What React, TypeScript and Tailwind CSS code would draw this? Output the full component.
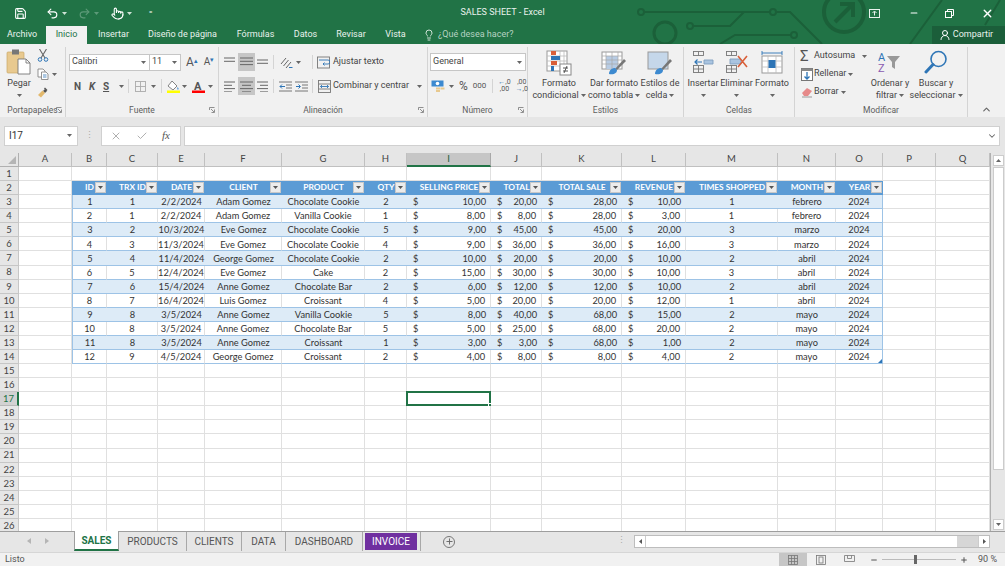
import React from 'react';
import { Save, Undo2, Redo2, Lightbulb, UserRound, X, Check, ChevronUp, ChevronDown, Plus, Minus, Pointer } from 'lucide-react';

const uiFont = { fontFamily: 'Roboto, "Noto Sans", sans-serif' };

const columns = ['A', 'B', 'C', 'E', 'F', 'G', 'H', 'I', 'J', 'K', 'L', 'M', 'N', 'O', 'P', 'Q'];
const headers = ['ID', 'TRX ID', 'DATE', 'CLIENT', 'PRODUCT', 'QTY', 'SELLING PRICE', 'TOTAL', 'TOTAL SALE', 'REVENUE', 'TIMES SHOPPED', 'MONTH', 'YEAR'];

const sales: (string | number)[][] = [
  [1, 1, '2/2/2024', 'Adam Gomez', 'Chocolate Cookie', 2, '10,00', '20,00', '28,00', '10,00', 1, 'febrero', 2024],
  [2, 1, '2/2/2024', 'Adam Gomez', 'Vanilla Cookie', 1, '8,00', '8,00', '28,00', '3,00', 1, 'febrero', 2024],
  [3, 2, '10/3/2024', 'Eve Gomez', 'Chocolate Cookie', 5, '9,00', '45,00', '45,00', '20,00', 3, 'marzo', 2024],
  [4, 3, '11/3/2024', 'Eve Gomez', 'Chocolate Cookie', 4, '9,00', '36,00', '36,00', '16,00', 3, 'marzo', 2024],
  [5, 4, '11/4/2024', 'George Gomez', 'Chocolate Cookie', 2, '10,00', '20,00', '20,00', '10,00', 2, 'abril', 2024],
  [6, 5, '12/4/2024', 'Eve Gomez', 'Cake', 2, '15,00', '30,00', '30,00', '10,00', 3, 'abril', 2024],
  [7, 6, '15/4/2024', 'Anne Gomez', 'Chocolate Bar', 2, '6,00', '12,00', '12,00', '10,00', 2, 'abril', 2024],
  [8, 7, '16/4/2024', 'Luis Gomez', 'Croissant', 4, '5,00', '20,00', '20,00', '12,00', 1, 'abril', 2024],
  [9, 8, '3/5/2024', 'Anne Gomez', 'Vanilla Cookie', 5, '8,00', '40,00', '68,00', '15,00', 2, 'mayo', 2024],
  [10, 8, '3/5/2024', 'Anne Gomez', 'Chocolate Bar', 5, '5,00', '25,00', '68,00', '20,00', 2, 'mayo', 2024],
  [11, 8, '3/5/2024', 'Anne Gomez', 'Croissant', 1, '3,00', '3,00', '68,00', '1,00', 2, 'mayo', 2024],
  [12, 9, '4/5/2024', 'George Gomez', 'Croissant', 2, '4,00', '8,00', '8,00', '4,00', 2, 'mayo', 2024],
];

const Caret = ({ color = '#666' }: { color?: string }) => (
  <svg width="5" height="3" viewBox="0 0 5 3" className="shrink-0"><path d="M0 0h5L2.5 3z" fill={color} /></svg>
);

const Lines = ({ rows }: { rows: [number, number][] }) => (
  <svg width="13" height="11" viewBox="0 0 13 11">
    {rows.map(([x, w], i) => <rect key={i} x={x} y={i * 3.3 + 0.5} width={w} height="1" fill="#666" />)}
  </svg>
);

const CircuitArt = () => (
  <svg className="absolute right-0 top-0 pointer-events-none" width="420" height="44" viewBox="0 0 420 44" fill="none" stroke="#1b6039" strokeWidth="2">
    <circle cx="56" cy="12" r="3" />
    <path d="M59 12h126" />
    <circle cx="80" cy="33" r="11" strokeWidth="3" />
    <circle cx="105" cy="26" r="3" />
    <path d="M108 26h37l14-14" />
    <circle cx="188" cy="12" r="3" />
    <path d="M191 12h14l32 32" />
    <path d="M135 44l15-9h56" />
    <circle cx="209" cy="35" r="3" />
    <circle cx="259" cy="12" r="20" strokeWidth="4" />
    <path d="M250 22l18-18M255 4h13v13" strokeWidth="4" />
    <path d="M325 44l32-44M400 25l15-25" />
  </svg>
);

const FilterButton = () => (
  <span className="absolute right-[1px] top-[1px] w-[11px] h-[11px] bg-[#ececec] border border-[#c8c8c8] flex items-center justify-center">
    <Caret color="#555" />
  </span>
);

const Group = ({ label, width, launcher, children }: { label: string; width: string; launcher?: boolean; children: React.ReactNode }) => (
  <div className={`${width} h-full shrink-0 flex flex-col border-r border-[#d4d4d4]`}>
    <div className="flex-1 min-h-0 flex">{children}</div>
    <div className="h-[14px] flex items-center justify-center relative text-[8.5px] text-[#5e5e5e]">
      {label}
      {launcher && (
        <svg className="absolute right-[3px] top-[4px]" width="6" height="6" viewBox="0 0 6 6" fill="none" stroke="#777" strokeWidth="0.8">
          <path d="M0.5 3V0.5H5.5M5.5 2.5V5.5H2.5M2 2l3 3" />
        </svg>
      )}
    </div>
  </div>
);

const BigButton = ({ icon, lines, width, caretLine }: { icon: React.ReactNode; lines: string[]; width: string; caretLine?: boolean }) => (
  <div className={`${width} shrink-0 flex flex-col items-center text-[9px] leading-[12px] text-[#444] whitespace-nowrap`}>
    <div className="h-[30px] pt-[3px] flex items-start justify-center">{icon}</div>
    <div>{lines[0]}</div>
    {caretLine ? (
      <div className="flex items-center gap-[2px]">{lines[1]}<Caret /></div>
    ) : (
      <div className="h-[12px] flex items-center"><Caret /></div>
    )}
  </div>
);

const CondFormatIcon = () => (
  <svg width="26" height="26" viewBox="0 0 26 26">
    <rect x="1" y="1" width="20" height="20" fill="#fff" stroke="#999" />
    <path d="M1 6h20M1 11h20M1 16h20M14 1v20M18 1v20" stroke="#bbb" strokeWidth="0.8" />
    <rect x="5" y="1" width="5" height="4" fill="#d9603a" />
    <rect x="5" y="6" width="9" height="4" fill="#2e75b6" />
    <rect x="5" y="11" width="6" height="4" fill="#d9603a" />
    <rect x="5" y="16" width="3" height="5" fill="#2e75b6" />
    <rect x="14" y="14" width="11" height="11" fill="#fff" stroke="#888" />
    <path d="M17 18h5M17 21h5M21 16l-3 7" stroke="#444" strokeWidth="0.9" />
  </svg>
);

const TableFormatIcon = ({ solid }: { solid?: boolean }) => (
  <svg width="26" height="26" viewBox="0 0 26 26">
    <rect x="1" y="2" width="20" height="17" fill={solid ? '#c5d7ea' : '#fff'} stroke="#999" />
    {!solid && <rect x="5" y="6" width="12" height="13" fill="#b8cce4" />}
    {!solid && <path d="M1 6h20M1 10h20M1 14h20M5 2v17M11 2v17M17 2v17" stroke="#a8a8a8" strokeWidth="0.7" />}
    <path d="M14 19l9-10 2 2-9 9z" fill="#777" />
    <path d="M8 24c0-4 3-6 6-6l2 2c0 3-3 5-8 4z" fill="#3d8ad0" />
  </svg>
);

const InsertIcon = () => (
  <svg width="22" height="24" viewBox="0 0 22 24" fill="none" stroke="#777" strokeWidth="0.9">
    <rect x="1.5" y="1.5" width="10" height="4" /><path d="M6.5 1.5v4" />
    <rect x="1.5" y="15.5" width="10" height="7" /><path d="M6.5 15.5v7M1.5 19h10" />
    <path d="M12 10h9v4h-9z" fill="#a9c4e0" stroke="#7f9fc0" />
    <path d="M10 12H3M5.5 9.5L3 12l2.5 2.5" stroke="#2e75b6" strokeWidth="1.2" />
  </svg>
);

const DeleteIcon = () => (
  <svg width="24" height="24" viewBox="0 0 24 24" fill="none" stroke="#777" strokeWidth="0.9">
    <rect x="1.5" y="1.5" width="10" height="4" /><path d="M6.5 1.5v4" />
    <rect x="1.5" y="15.5" width="10" height="7" /><path d="M6.5 15.5v7M1.5 19h10" />
    <path d="M5 9h11v5H5z" fill="#a9c4e0" stroke="#7f9fc0" />
    <path d="M13 6l9 11M22 6l-9 11" stroke="#d9603a" strokeWidth="1.6" />
  </svg>
);

const FormatCellIcon = () => (
  <svg width="22" height="26" viewBox="0 0 22 26" fill="none">
    <path d="M1 3h20M1 1v4M21 1v4" stroke="#2e75b6" strokeWidth="0.9" />
    <rect x="1" y="6" width="20" height="17" fill="#fff" stroke="#999" />
    <path d="M1 11h20M1 17h20M7 6v17M15 6v17" stroke="#bbb" strokeWidth="0.8" />
    <rect x="7.5" y="10" width="7" height="8" fill="#2e75b6" />
  </svg>
);

const SortIcon = () => (
  <svg width="24" height="27" viewBox="0 0 24 27" fill="none">
    <path d="M9 6h13l-5 6v7l-3-2v-5z" fill="#999" />
    <text x="0" y="11" fontSize="11" fontFamily="Roboto" fill="#2e75b6">A</text>
    <text x="0" y="22" fontSize="11" fontFamily="Roboto" fill="#8a5ab0">Z</text>
  </svg>
);

const SearchIcon = () => (
  <svg width="24" height="24" viewBox="0 0 24 24" fill="none" stroke="#2e75b6">
    <circle cx="14.5" cy="9" r="7.5" strokeWidth="1.6" />
    <path d="M9 14.5L2 22" strokeWidth="3" strokeLinecap="round" />
  </svg>
);

const PasteIcon = () => (
  <svg width="26" height="26" viewBox="0 0 26 26">
    <rect x="1" y="3" width="17" height="21" rx="1" fill="#e8c98f" stroke="#c9a765" strokeWidth="0.7" />
    <rect x="6" y="0.5" width="7" height="5" fill="#777" />
    <path d="M12 10h8l4 4v11H12z" fill="#fff" stroke="#777" strokeWidth="0.9" />
    <path d="M20 10v4h4" fill="none" stroke="#777" strokeWidth="0.9" />
  </svg>
);

const ScissorsIcon = () => (
  <svg width="12" height="13" viewBox="0 0 12 13" fill="none">
    <path d="M2.5 0l5.5 9M9.5 0L4 9" stroke="#666" strokeWidth="1.1" />
    <circle cx="3" cy="10.5" r="1.8" stroke="#2e75b6" />
    <circle cx="9" cy="10.5" r="1.8" stroke="#2e75b6" />
  </svg>
);

const CopyIcon = () => (
  <svg width="12" height="12" viewBox="0 0 12 12" fill="#fff" stroke="#7a7a7a" strokeWidth="0.8">
    <path d="M1 1h5l2 2v6H1z" />
    <path d="M4.5 4h4.5l2 2v5.5H4.5z" />
    <path d="M6 7h3.5M6 9h3.5" stroke="#2e75b6" />
  </svg>
);

const BrushIcon = () => (
  <svg width="12" height="12" viewBox="0 0 12 12">
    <path d="M6 5l2-2 2 2-2 2z" fill="#555" />
    <path d="M8 1.5l2.5 2.5L9.5 5 7 2.5z" fill="#555" />
    <path d="M1 9l4.5-4.5 2.5 2.5L4 11.5z" fill="#e3b96d" />
  </svg>
);

const FillIcon = () => (
  <svg width="13" height="13" viewBox="0 0 13 13">
    <path d="M5 1l5 5-4 4-5-4z" fill="#fff" stroke="#666" strokeWidth="0.8" />
    <path d="M10.5 7c1 1.2 1.5 2 .8 2.6-.6.4-1.3-.2-.8-2.6z" fill="#3d8ad0" />
    <rect x="0" y="10.5" width="13" height="2.5" fill="#ffff00" />
  </svg>
);

const FontColorIcon = () => (
  <svg width="13" height="13" viewBox="0 0 13 13">
    <text x="2" y="9.5" fontSize="11" fontFamily="Roboto" fill="#555">A</text>
    <rect x="0" y="10.5" width="13" height="2.5" fill="#ff0000" />
  </svg>
);

const BordersIcon = () => (
  <svg width="11" height="11" viewBox="0 0 11 11" fill="none" stroke="#aaa" strokeWidth="0.9">
    <rect x="0.5" y="0.5" width="10" height="10" /><path d="M5.5 0.5v10M0.5 5.5h10" />
  </svg>
);

const OrientIcon = () => (
  <svg width="13" height="13" viewBox="0 0 13 13" fill="none" stroke="#666" strokeWidth="1">
    <path d="M1 8l5-6M3.5 10l5-6M6 12l5-6" />
    <path d="M9 11.5h3.5" stroke="#2e75b6" />
  </svg>
);

const IndentIcon = ({ flip }: { flip?: boolean }) => (
  <svg width="13" height="11" viewBox="0 0 13 11" fill="none" stroke="#777" strokeWidth="1">
    <path d="M0 1h13M0 10h13M7 4h6M7 7h6" />
    <path d={flip ? 'M1 5.5h4M3.5 3.5l2 2-2 2' : 'M6 5.5H1M3 3.5l-2 2 2 2'} stroke="#2e75b6" />
  </svg>
);

const WrapIcon = () => (
  <svg width="13" height="13" viewBox="0 0 13 13" fill="none" stroke="#777" strokeWidth="0.9">
    <rect x="0.5" y="1" width="12" height="11" />
    <path d="M2 4h9a1.5 1.5 0 010 4H6M7.5 6.5L6 8l1.5 1.5" stroke="#2e75b6" />
  </svg>
);

const MergeIcon = () => (
  <svg width="13" height="13" viewBox="0 0 13 13" fill="none" stroke="#777" strokeWidth="0.9">
    <rect x="0.5" y="0.5" width="12" height="12" />
    <path d="M0.5 4h12M0.5 9h12" />
    <path d="M2.5 6.5h8M4 5l-1.5 1.5L4 8M9 5l1.5 1.5L9 8" stroke="#2e75b6" />
  </svg>
);

const MoneyIcon = () => (
  <svg width="14" height="13" viewBox="0 0 14 13">
    <rect x="0.5" y="0.5" width="12" height="6" fill="#3d8ad0" />
    <circle cx="6.5" cy="3.5" r="1.8" fill="#fff" />
    <rect x="5" y="7.5" width="4" height="2" fill="#e8c98f" />
    <rect x="5" y="10" width="4" height="2" fill="#e8c98f" />
    <rect x="9.5" y="7.5" width="4" height="2" fill="#e8c98f" />
  </svg>
);

const FillDownIcon = () => (
  <svg width="12" height="13" viewBox="0 0 12 13" fill="none">
    <rect x="0.5" y="0.5" width="11" height="12" fill="#fff" stroke="#777" />
    <rect x="0.5" y="0.5" width="11" height="2.5" fill="#888" />
    <path d="M6 4v7M3.5 8.5L6 11l2.5-2.5" stroke="#2e75b6" strokeWidth="1.3" />
  </svg>
);

const EraserIcon = () => (
  <svg width="12" height="12" viewBox="0 0 12 12">
    <path d="M1 7l5-5 5 3-4 5H3z" fill="#e68a8a" />
    <path d="M1 11h10" stroke="#999" />
  </svg>
);

const SmallAction = ({ icon, label }: { icon: React.ReactNode; label: string }) => (
  <div className="h-[18px] flex items-center gap-[1px] text-[9px] text-[#444] whitespace-nowrap">
    <span className="w-[13px] flex justify-center">{icon}</span>
    {label}
  </div>
);

const Ribbon = () => (
  <div className="h-[73px] shrink-0 bg-[#f1f1f1] flex pt-[3px]" style={uiFont}>
    <Group label="Portapapeles" width="w-[66px]" launcher>
      <div className="w-[35px] pl-[3px] flex flex-col items-center text-[9px] text-[#444]">
        <div className="mt-[2px]"><PasteIcon /></div>
        <div className="mt-[2px] leading-[13px]">Pegar</div>
        <div className="mt-[4px]"><Caret /></div>
      </div>
      <div className="flex flex-col gap-[6px] pt-[2px] pl-[2px]">
        <ScissorsIcon />
        <div className="flex items-center gap-[3px]"><CopyIcon /><Caret /></div>
        <BrushIcon />
      </div>
    </Group>
    <Group label="Fuente" width="w-[153px]" launcher>
      <div className="flex flex-col pl-[3px] pt-[6px]">
        <div className="flex items-center h-[18px]">
          <div className="w-[81px] h-[17px] bg-white border border-[#c6c6c6] flex items-center justify-between px-[2px] pr-[3px] text-[9px] text-[#444]">Calibri<Caret /></div>
          <div className="w-[32px] h-[17px] -ml-px bg-white border border-[#c6c6c6] flex items-center justify-between px-[2px] pr-[3px] text-[9px] text-[#444]">11<Caret /></div>
          <span className="ml-[5px] text-[12px] text-[#555] leading-none">A<sup className="text-[7px] text-[#2e75b6]">▴</sup></span>
          <span className="ml-[6px] text-[10px] text-[#555] leading-none">A<sup className="text-[7px] text-[#2e75b6]">▾</sup></span>
        </div>
        <div className="flex items-center h-[18px] mt-[6px] text-[10px] font-bold text-[#555]">
          <span className="ml-[5px] w-[11px]">N</span>
          <span className="ml-[4px] w-[11px] italic">K</span>
          <span className="ml-[3px] w-[12px] underline">S</span>
          <span className="ml-[4px]"><Caret /></span>
          <span className="ml-[4px] w-px h-[14px] bg-[#d4d4d4]" />
          <span className="ml-[6px]"><BordersIcon /></span>
          <span className="ml-[5px]"><Caret /></span>
          <span className="ml-[5px] w-px h-[14px] bg-[#d4d4d4]" />
          <span className="ml-[5px]"><FillIcon /></span>
          <span className="ml-[2px]"><Caret /></span>
          <span className="ml-[5px]"><FontColorIcon /></span>
          <span className="ml-[3px]"><Caret /></span>
        </div>
      </div>
    </Group>
    <Group label="Alineación" width="w-[209px]" launcher>
      <div className="flex flex-col pl-[5px] pt-[6px] text-[9px] text-[#444]">
        <div className="flex items-center h-[18px]">
          <span className="w-[14px]"><Lines rows={[[0, 11], [0, 11]]} /></span>
          <span className="w-[17px] h-[18px] bg-[#c6c6c6] flex items-center justify-center"><Lines rows={[[0, 13], [0, 13], [0, 13]]} /></span>
          <span className="w-[15px] pl-[2px] pt-[4px]"><Lines rows={[[0, 11], [0, 11]]} /></span>
          <span className="ml-[3px] w-px h-[14px] bg-[#d4d4d4]" />
          <span className="ml-[6px]"><OrientIcon /></span>
          <span className="ml-[3px]"><Caret /></span>
          <span className="ml-[11px] w-px h-[14px] bg-[#d4d4d4]" />
          <span className="ml-[4px]"><WrapIcon /></span>
          <span className="ml-[3px] whitespace-nowrap">Ajustar texto</span>
        </div>
        <div className="flex items-center h-[18px] mt-[6px]">
          <span className="w-[14px]"><Lines rows={[[0, 11], [0, 8], [0, 11], [0, 8]]} /></span>
          <span className="w-[17px] h-[18px] bg-[#c6c6c6] flex items-center justify-center"><Lines rows={[[0, 13], [2, 9], [0, 13], [2, 9]]} /></span>
          <span className="w-[15px] pl-[2px]"><Lines rows={[[0, 11], [3, 8], [0, 11], [3, 8]]} /></span>
          <span className="ml-[3px] w-px h-[14px] bg-[#d4d4d4]" />
          <span className="ml-[5px]"><IndentIcon /></span>
          <span className="ml-[3px]"><IndentIcon flip /></span>
          <span className="ml-[4px] w-px h-[14px] bg-[#d4d4d4]" />
          <span className="ml-[5px]"><MergeIcon /></span>
          <span className="ml-[2px] whitespace-nowrap">Combinar y centrar</span>
          <span className="ml-[8px]"><Caret /></span>
        </div>
      </div>
    </Group>
    <Group label="Número" width="w-[100px]" launcher>
      <div className="flex flex-col pl-[2px] pt-[6px] text-[#555]">
        <div className="w-[96px] h-[18px] bg-white border border-[#c6c6c6] flex items-center justify-between px-[2px] pr-[3px] text-[9px] text-[#444]">General<Caret /></div>
        <div className="flex items-center h-[18px] mt-[6px]">
          <span className="ml-[1px]"><MoneyIcon /></span>
          <span className="ml-[4px]"><Caret /></span>
          <span className="ml-[5px] text-[12px] leading-none">%</span>
          <span className="ml-[5px] text-[8px]">000</span>
          <span className="ml-[6px] w-px h-[14px] bg-[#d4d4d4]" />
          <span className="ml-[5px] text-[7px] leading-[7px] text-center"><span className="text-[#2e75b6]">←</span>,0<br />,00</span>
          <span className="ml-[5px] text-[7px] leading-[7px] text-center">,00<br /><span className="text-[#2e75b6]">→</span>,0</span>
        </div>
      </div>
    </Group>
    <Group label="Estilos" width="w-[156px]">
      <BigButton width="w-[60px] ml-[1px]" icon={<CondFormatIcon />} lines={['Formato', 'condicional']} caretLine />
      <BigButton width="w-[50px]" icon={<TableFormatIcon />} lines={['Dar formato', 'como tabla']} caretLine />
      <BigButton width="w-[42px]" icon={<TableFormatIcon solid />} lines={['Estilos de', 'celda']} caretLine />
    </Group>
    <Group label="Celdas" width="w-[111px]">
      <BigButton width="w-[32px] ml-[3px]" icon={<InsertIcon />} lines={['Insertar']} />
      <BigButton width="w-[35px]" icon={<DeleteIcon />} lines={['Eliminar']} />
      <BigButton width="w-[36px]" icon={<FormatCellIcon />} lines={['Formato']} />
    </Group>
    <Group label="Modificar" width="w-[173px]">
      <div className="w-[74px] pl-[5px] flex flex-col">
        <div className="flex items-center">
          <div className="h-[18px] flex items-center gap-[1px] text-[9px] text-[#444]">
            <span className="text-[15px] leading-none w-[13px] text-[#555]">Σ</span>Autosuma
          </div>
          <span className="ml-[7px]"><Caret /></span>
        </div>
        <div className="flex items-center"><SmallAction icon={<FillDownIcon />} label="Rellenar" /><span className="ml-[2px]"><Caret /></span></div>
        <div className="flex items-center"><SmallAction icon={<EraserIcon />} label="Borrar" /><span className="ml-[2px]"><Caret /></span></div>
      </div>
      <BigButton width="w-[46px] ml-[-2px]" icon={<SortIcon />} lines={['Ordenar y', 'filtrar']} caretLine />
      <BigButton width="w-[46px]" icon={<SearchIcon />} lines={['Buscar y', 'seleccionar']} caretLine />
    </Group>
    <div className="flex-1 flex items-end justify-center pb-[2px]">
      <ChevronUp size={11} color="#666" strokeWidth={2.5} />
    </div>
  </div>
);

const FormulaBar = () => (
  <div className="h-[36px] shrink-0 bg-[#e6e6e6] flex items-center pl-[4px] pr-[5px] pt-[1px]" style={uiFont}>
    <div className="w-[74px] h-[20px] bg-white border border-[#d0d0d0] flex items-center justify-between pl-[4px] pr-[5px] text-[10px] text-[#333]">
      I17<Caret />
    </div>
    <div className="w-[23px] flex justify-center text-[#aaa] text-[9px] tracking-tighter">⋮</div>
    <div className="w-[80px] h-[20px] bg-white border border-[#d0d0d0] flex items-center pl-[8px] gap-[14px] text-[#b0b0b0]">
      <X size={12} />
      <Check size={12} />
      <span className="italic text-[11px] text-[#555]" style={{ fontFamily: '"Liberation Serif", serif' }}>fx</span>
    </div>
    <div className="flex-1 ml-[3px] h-[20px] bg-white border border-[#d0d0d0] flex items-center justify-end pr-[2px]">
      <ChevronDown size={10} color="#666" strokeWidth={2.5} />
    </div>
  </div>
);

const DataCell = ({ value, col, band, last }: { value: string | number; col: number; band: boolean; last: boolean }) => {
  const money = col >= 6 && col <= 9;
  return (
    <div className={`relative flex items-center whitespace-nowrap pt-px text-[9.25px] text-[#333] border-b border-[#9dc3e6] ${band ? 'bg-[#ddebf7]' : 'bg-white'} ${col === 0 ? 'border-l border-l-[#9dc3e6]' : ''} ${col === 12 ? 'border-r border-r-[#9dc3e6]' : band ? '' : 'border-r border-r-[#e0e0e0]'} ${money ? 'justify-between pl-[6px] pr-[5px]' : 'justify-center'}`}>
      {money && <span>$</span>}
      <span>{value}</span>
      {last && col === 12 && <span className="absolute right-0 bottom-0 w-0 h-0 border-l-[4px] border-l-transparent border-b-[4px] border-b-[#2e75b6]" />}
    </div>
  );
};

const BlankCell = ({ selected }: { selected?: boolean }) => (
  <div className="relative border-r border-b border-[#e0e0e0] bg-white">
    {selected && (
      <>
        <div className="absolute -left-px -top-[1px] right-[-1px] bottom-[-1px] border-2 border-[#217346]" />
        <div className="absolute right-[-2px] bottom-[-2px] w-[4px] h-[4px] bg-[#217346] border border-white" />
      </>
    )}
  </div>
);

const RowHeader = ({ n }: { n: number }) => (
  <div className={`flex items-center justify-center pt-px text-[9.5px] border-b ${n === 17 ? 'bg-[#d2d2d2] border-[#b8b8b8] border-r-2 border-r-[#217346] text-[#217346]' : 'bg-[#e6e6e6] border-r border-[#c6c6c6] text-[#444]'}`}>{n}</div>
);

const Sheet = () => {
  const rowNumbers = Array.from({ length: 26 }, (_, i) => i + 1);
  return (
    <div className="flex-1 min-w-0 overflow-hidden grid grid-cols-[19px_53px_35px_51px_47px_77px_83px_42px_84px_51px_80px_64px_92px_58px_47px_53px_54px] grid-rows-[14px_repeat(26,14.08px)]" style={{ fontFamily: 'Lato, sans-serif' }}>
      <div className="bg-[#e6e6e6] border-r border-b border-[#b0b0b0] relative">
        <span className="absolute right-[2px] bottom-[2px] w-0 h-0 border-l-[8px] border-l-transparent border-b-[8px] border-b-[#b5b5b5]" />
      </div>
      {columns.map(c => (
        <div key={c} className={`flex items-center justify-center text-[9.5px] border-r ${c === 'I' ? 'bg-[#c6c6c6] border-b-2 border-b-[#217346] border-r-[#a8a8a8] text-[#1b6039]' : 'bg-[#e6e6e6] border-b border-[#c0c0c0] text-[#444]'}`}>{c}</div>
      ))}
      {rowNumbers.map(n => (
        <React.Fragment key={n}>
          <RowHeader n={n} />
          {columns.map((c, i) => {
            const tableCol = i - 1;
            if (tableCol >= 0 && tableCol < 13 && n === 2) {
              return (
                <div key={c} className="relative flex items-center justify-center bg-[#5b9bd5] text-white font-bold text-[8.4px] whitespace-nowrap border-b border-[#5b9bd5]">
                  {headers[tableCol]}
                  <FilterButton />
                </div>
              );
            }
            if (tableCol >= 0 && tableCol < 13 && n >= 3 && n <= 14) {
              return <DataCell key={c} value={sales[n - 3][tableCol]} col={tableCol} band={n % 2 === 1} last={n === 14} />;
            }
            return <BlankCell key={c} selected={c === 'I' && n === 17} />;
          })}
        </React.Fragment>
      ))}
    </div>
  );
};

const VerticalScroll = () => (
  <div className="w-[15px] shrink-0 bg-[#e6e6e6] border-l border-[#b0b0b0] flex flex-col items-center pt-[2px] pb-[1px] gap-px pl-[1px]">
    <div className="w-[11px] h-[11px] bg-white border border-[#ccc] flex items-center justify-center"><svg width="5" height="3" viewBox="0 0 5 3"><path d="M2.5 0L5 3H0z" fill="#666" /></svg></div>
    <div className="w-[11px] h-[303px] bg-white border border-[#ccc]" />
    <div className="flex-1" />
    <div className="w-[11px] h-[11px] bg-white border border-[#ccc] flex items-center justify-center"><Caret /></div>
  </div>
);

const tabs = ['PRODUCTS', 'CLIENTS', 'DATA', 'DASHBOARD'];

const SheetTabs = () => (
  <div className="h-[21px] shrink-0 bg-[#e6e6e6] border-t border-[#9e9e9e] flex text-[10px] text-[#555]" style={uiFont}>
    <div className="w-[74px] flex items-center justify-center gap-[14px] pl-[2px] pb-[2px]">
      <svg width="4" height="6" viewBox="0 0 4 6"><path d="M4 0v6L0 3z" fill="#b5b5b5" /></svg>
      <svg width="4" height="6" viewBox="0 0 4 6"><path d="M0 0v6l4-3z" fill="#b5b5b5" /></svg>
    </div>
    <div className="w-[45px] h-[20px] -mt-px bg-white border-x border-[#9e9e9e] border-b-2 border-b-[#217346] font-bold text-[#217346] flex items-center justify-center">SALES</div>
    {tabs.map((t, i) => (
      <div key={t} className={`h-[19px] flex items-center justify-center border-r border-[#a8a8a8] ${['w-[68px]', 'w-[55px]', 'w-[44px]', 'w-[77px]'][i]}`}>{t}</div>
    ))}
    <div className="w-[52px] h-[17px] mt-[1px] ml-[2px] bg-[#7030a0] text-white flex items-center justify-center">INVOICE</div>
    <div className="w-[4px] h-[19px] border-r border-[#a8a8a8]" />
    <div className="ml-[22px] h-[19px] flex items-center">
      <span className="w-[12px] h-[12px] rounded-full border border-[#777] flex items-center justify-center"><Plus size={9} color="#666" strokeWidth={2.5} /></span>
    </div>
    <div className="flex-1 flex items-center justify-end text-[#aaa] pr-[8px] pb-[2px] text-[9px]">⋮</div>
    <div className="w-[356px] h-[13px] mt-[3px] mr-[15px] flex bg-[#d6d6d6] border border-[#bdbdbd]">
      <div className="w-[11px] bg-white border-r border-[#ccc] flex items-center justify-center"><svg width="3" height="5" viewBox="0 0 3 5"><path d="M3 0v5L0 2.5z" fill="#555" /></svg></div>
      <div className="w-[311px] bg-white" />
      <div className="flex-1" />
      <div className="w-[11px] bg-white border-l border-[#ccc] flex items-center justify-center"><svg width="3" height="5" viewBox="0 0 3 5"><path d="M0 0v5l3-2.5z" fill="#555" /></svg></div>
    </div>
  </div>
);

const StatusBar = () => (
  <div className="h-[14px] shrink-0 bg-[#f1f1f1] border-t border-[#d6d6d6] flex items-center text-[9px] text-[#555]" style={uiFont}>
    <span className="pl-[5px]">Listo</span>
    <div className="flex-1" />
    <div className="w-[28px] h-[13px] bg-[#c6c6c6] flex items-center justify-center">
      <svg width="10" height="10" viewBox="0 0 10 10" fill="none" stroke="#777" strokeWidth="0.8"><rect x="0.5" y="0.5" width="9" height="9" /><path d="M3.5 0.5v9M6.5 0.5v9M0.5 3.5h9M0.5 6.5h9" /></svg>
    </div>
    <div className="w-[28px] flex justify-center">
      <svg width="10" height="10" viewBox="0 0 10 10" fill="none" stroke="#777" strokeWidth="0.8"><rect x="0.5" y="0.5" width="9" height="9" /><rect x="3" y="2" width="4" height="6" /></svg>
    </div>
    <div className="w-[28px] flex justify-center">
      <svg width="11" height="10" viewBox="0 0 11 10" fill="none" stroke="#777" strokeWidth="0.8"><path d="M0.5 0.5h10v6h-10zM3.5 0.5v3h4v-3" /></svg>
    </div>
    <Minus size={8} color="#555" strokeWidth={3} className="ml-[7px]" />
    <div className="relative w-[74px] h-px bg-[#bbb] ml-[4px]">
      <span className="absolute left-[32px] -top-[4px] w-[3px] h-[9px] bg-[#666]" />
    </div>
    <Plus size={8} color="#555" strokeWidth={3} className="ml-[4px]" />
    <span className="ml-[10px] mr-[8px] whitespace-nowrap">90 %</span>
  </div>
);

const App: React.FC = () => (
  <div className="w-[1005px] h-[566px] flex flex-col overflow-hidden bg-white">
    <div className="relative shrink-0 bg-[#217346] text-white" style={uiFont}>
      <CircuitArt />
      <div className="relative h-[26px] grid grid-cols-[1fr_auto_1fr] items-center">
        <div className="flex items-center pl-[14px]">
          <Save size={13} color="#fff" />
          <Undo2 size={13} color="#fff" className="ml-[19px]" />
          <span className="ml-[3px]"><Caret color="#cfe3d7" /></span>
          <Redo2 size={13} color="#5d9a79" className="ml-[11px]" />
          <span className="ml-[3px]"><Caret color="#5d9a79" /></span>
          <Pointer size={13} color="#fff" className="ml-[12px]" />
          <span className="ml-[3px]"><Caret color="#cfe3d7" /></span>
          <span className="ml-[17px] text-[9px] leading-none">⁼</span>
        </div>
        <div className="text-[9px] text-[#e9f2ed]">SALES SHEET - Excel</div>
        <div className="flex items-center justify-end">
          <svg width="11" height="9" viewBox="0 0 11 9" fill="none" stroke="#e9f2ed" className="mr-[29px]"><rect x="0.5" y="0.5" width="10" height="8" /><path d="M5.5 6.5v-4M3.5 4l2-2 2 2" /></svg>
          <Minus size={10} color="#fff" strokeWidth={2.5} className="mr-[26px]" />
          <svg width="9" height="9" viewBox="0 0 9 9" fill="none" stroke="#fff" className="mr-[27px]"><rect x="0.5" y="2.5" width="6" height="6" /><path d="M2.5 2.5v-2h6v6h-2" /></svg>
          <X size={13} color="#fff" strokeWidth={2.5} className="mr-[11px]" />
        </div>
      </div>
      <div className="relative h-[18px] flex items-stretch text-[9px] text-[#e9f2ed]">
        <span className="w-[46px] pr-[2px] flex items-center justify-center">Archivo</span>
        <span className="w-[41px] bg-[#f1f1f1] text-[#217346] flex items-center justify-center">Inicio</span>
        <span className="w-[53px] flex items-center justify-center">Insertar</span>
        <span className="w-[85px] flex items-center justify-center whitespace-nowrap">Diseño de página</span>
        <span className="w-[61px] flex items-center justify-center">Fórmulas</span>
        <span className="w-[39px] flex items-center justify-center">Datos</span>
        <span className="w-[52px] flex items-center justify-center">Revisar</span>
        <span className="w-[37px] flex items-center justify-center">Vista</span>
        <span className="ml-[9px] flex items-center gap-[3px] whitespace-nowrap text-[#b6d2c2]"><Lightbulb size={12} color="#cfe3d7" />¿Qué desea hacer?</span>
        <div className="flex-1" />
        <span className="w-[73px] pr-[5px] bg-[#1b5e3a] flex items-center justify-center gap-[2px]"><UserRound size={12} color="#fff" />Compartir</span>
      </div>
    </div>
    <Ribbon />
    <FormulaBar />
    <div className="flex-1 min-h-0 flex">
      <Sheet />
      <VerticalScroll />
    </div>
    <SheetTabs />
    <StatusBar />
  </div>
);

export default App;
